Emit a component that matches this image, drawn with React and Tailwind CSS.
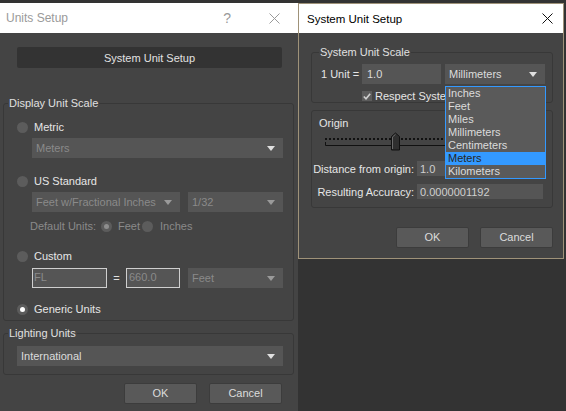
import React from 'react';

const Arrow = ({ light }) => (
  <svg width="8" height="5" viewBox="0 0 8 5" className="shrink-0">
    <polygon points="0,0 8,0 4,5" fill={light ? '#e0e0e0' : '#9a9a9a'} />
  </svg>
);

const Select = ({ text, light, arrowLight, className = '' }) => (
  <div className={'flex items-center justify-between h-[20px] bg-[#555555] pl-[4px] pr-[8px] ' + className}>
    <span className={light ? 'text-[#dcdcdc] whitespace-nowrap' : 'text-[#8a8a8a] whitespace-nowrap'}>{text}</span>
    <Arrow light={light || arrowLight} />
  </div>
);

const Radio = ({ dot }) => (
  <span className="w-[11px] h-[11px] rounded-full bg-[#5c5c5c] flex items-center justify-center shrink-0">
    {dot === 'on' && <span className="w-[5px] h-[5px] rounded-full bg-white" />}
    {dot === 'dim' && <span className="w-[5px] h-[5px] rounded-full bg-[#8e8e8e]" />}
  </span>
);

const Button = ({ children }) => (
  <button className="w-[73px] h-[21px] bg-[#595959] border border-[#3c3c3c] rounded-[2px] text-[#dcdcdc] leading-none">
    {children}
  </button>
);

const Close = ({ color }) => (
  <svg width="11" height="11" viewBox="0 0 11 11">
    <path d="M0.5 0.5 L10.5 10.5 M10.5 0.5 L0.5 10.5" stroke={color} strokeWidth="1" />
  </svg>
);

const Slider = () => {
  const dots = [];
  for (let x = 0; x < 216; x += 4) dots.push(<rect key={x} x={x} y="6" width="2" height="2" fill="#111" />);
  return (
    <svg width="222" height="19" viewBox="0 0 222 19" className="mt-[2px] ml-[13px]">
      {dots}
      <path d="M0.5 10 V13.5 H220" stroke="#111" strokeWidth="1" fill="none" />
      <polygon points="66.5,4.5 70.5,1 74.5,4.5 74.5,18 66.5,18" fill="#2f2f2f" stroke="#111" strokeWidth="1" />
      <path d="M67.5 17 V5 L70.5 2.3" stroke="#6a6a6a" strokeWidth="1" fill="none" />
    </svg>
  );
};

export default function App() {
  return (
    <div className="relative w-[566px] h-[411px] overflow-hidden bg-[#333333] font-['Liberation_Sans',Arial,sans-serif] text-[11px] leading-[14px]">
      {/* Units Setup window */}
      <div className="absolute left-0 top-[3px] w-[298px] h-[408px] bg-[#444444] flex flex-col">
        <div className="h-[30px] bg-white flex items-center pl-[6px] text-[#9a9a9a] shrink-0">
          <span className="text-[12px]">Units Setup</span>
          <span className="ml-auto mr-[38px] text-[14px]">?</span>
          <span className="mr-[18px]"><Close color="#9a9a9a" /></span>
        </div>

        <button className="mt-[14px] ml-[17px] mr-[16px] h-[21px] bg-[#333333] rounded-[2px] text-[#e2e2e2] shrink-0">
          System Unit Setup
        </button>

        <fieldset className="mt-[28px] ml-[3px] w-[291px] border border-[#383838] rounded-[3px] p-0">
          <legend className="ml-[4px] px-[1px] leading-[15px] text-[#e0e0e0]">Display Unit Scale</legend>
          <div className="pl-[13px] pr-[10px] pt-[9px] pb-[4px] flex flex-col">
            <div className="h-[14px] flex items-center gap-[6px] text-[#e6e6e6]">
              <Radio /> <span>Metric</span>
            </div>
            <Select text="Meters" arrowLight className="mt-[4px] ml-[15px]" />

            <div className="mt-[16px] h-[14px] flex items-center gap-[6px] text-[#e6e6e6]">
              <Radio /> <span>US Standard</span>
            </div>
            <div className="mt-[4px] ml-[15px] flex gap-[8px]">
              <Select text="Feet w/Fractional Inches" className="w-[148px]" />
              <Select text="1/32" className="flex-1" />
            </div>
            <div className="mt-[7px] ml-[13px] h-[14px] flex items-center text-[#8a8a8a] whitespace-nowrap">
              <span className="w-[71px]">Default Units:</span>
              <Radio dot="dim" />
              <span className="ml-[6px] w-[24px]">Feet</span>
              <Radio />
              <span className="ml-[7px]">Inches</span>
            </div>

            <div className="mt-[16px] h-[14px] flex items-center gap-[6px] text-[#e6e6e6]">
              <Radio /> <span>Custom</span>
            </div>
            <div className="mt-[5px] ml-[15px] flex items-center">
              <div className="w-[75px] h-[20px] border border-[#cfcfcf] bg-[#555555] text-[#8a8a8a] pl-[1px] leading-[17px]">FL</div>
              <span className="w-[19px] text-center text-[#e0e0e0]">=</span>
              <div className="w-[54px] h-[20px] border border-[#cfcfcf] bg-[#555555] text-[#8a8a8a] pl-[2px] leading-[17px]">660.0</div>
              <Select text="Feet" className="ml-[8px] flex-1" />
            </div>

            <div className="mt-[14px] h-[14px] flex items-center gap-[6px] text-[#e6e6e6]">
              <Radio dot="on" /> <span>Generic Units</span>
            </div>
          </div>
        </fieldset>

        <fieldset className="mt-[5px] ml-[3px] w-[291px] border border-[#383838] rounded-[3px] p-0">
          <legend className="ml-[4px] px-[1px] leading-[15px] text-[#e0e0e0]">Lighting Units</legend>
          <div className="pl-[13px] pr-[10px] pt-[5px] pb-[8px]">
            <Select text="International" light />
          </div>
        </fieldset>

        <div className="mt-[8px] flex justify-end gap-[12px] pr-[16px]">
          <Button>OK</Button>
          <Button>Cancel</Button>
        </div>
      </div>

      {/* System Unit Setup window */}
      <div className="absolute left-[298px] top-[3px] w-[266px] h-[256px] border border-[#9f9279] bg-[#444444] flex flex-col">
        <div className="h-[29px] bg-white flex items-center pl-[8px] pr-[10px] justify-between shrink-0 text-black">
          <span className="text-[11.5px]">System Unit Setup</span>
          <Close color="#111" />
        </div>

        <fieldset className="mt-[12px] ml-[12px] w-[242px] border border-[#383838] rounded-[3px] p-0">
          <legend className="ml-[7px] px-[1px] leading-[15px] text-[#e0e0e0]">System Unit Scale</legend>
          <div className="pt-[4px] pl-[9px] flex flex-col">
            <div className="h-[20px] flex items-center">
              <span className="w-[41px] text-[#e6e6e6] whitespace-nowrap">1 Unit =</span>
              <div className="w-[79px] h-[20px] bg-[#555555] text-[#dcdcdc] pl-[5px] flex items-center">1.0</div>
              <Select text="Millimeters" light className="ml-[4px] w-[100px]" />
            </div>
            <div className="mt-[6px] ml-[41px] h-[12px] flex items-center text-[#e6e6e6]">
              <span className="w-[10px] h-[10px] bg-[#5c5c5c] flex items-center justify-center shrink-0">
                <svg width="8" height="7" viewBox="0 0 8 7">
                  <path d="M0.8 3.5 L3 5.8 L7.2 0.8" stroke="#d0d0d0" strokeWidth="1.6" fill="none" />
                </svg>
              </span>
              {/* the open list hides the rest of this label */}
              <span className="ml-[3px] w-[70px] overflow-hidden whitespace-nowrap">Respect System Units in Files</span>
            </div>
          </div>
        </fieldset>

        <div className="mt-[7px] ml-[12px] w-[242px] border border-[#383838] rounded-[3px] pt-[5px] pb-[8px]">
          <div className="pl-[7px] text-[#e6e6e6]">Origin</div>
          <Slider />
          <div className="mt-[10px] grid grid-cols-[102px_126px] gap-x-[3px] gap-y-[8px] items-center">
            <span className="text-right text-[#e6e6e6] whitespace-nowrap">Distance from origin:</span>
            <div className="h-[15px] bg-[#555555] text-[#cfcfcf] pl-[3px] flex items-center">1.0</div>
            <span className="text-right text-[#e6e6e6] whitespace-nowrap">Resulting Accuracy:</span>
            <div className="h-[15px] bg-[#555555] text-[#cfcfcf] pl-[3px] flex items-center">0.0000001192</div>
          </div>
        </div>

        <div className="mt-[19px] flex justify-end gap-[11px] pr-[10px]">
          <Button>OK</Button>
          <Button>Cancel</Button>
        </div>

        {/* open unit list */}
        <div className="absolute left-[146px] top-[82px] w-[101px] h-[93px] border border-[#3399ff] bg-[#5a5a5a] flex flex-col">
          {['Inches', 'Feet', 'Miles', 'Millimeters', 'Centimeters', 'Meters', 'Kilometers'].map((u) => (
            <div
              key={u}
              className={
                'h-[13px] leading-[13px] pl-[2px] ' +
                (u === 'Meters' ? 'bg-[#3399ff] text-[#262626]' : 'text-[#dcdcdc]')
              }
            >
              {u}
            </div>
          ))}
        </div>
      </div>
    </div>
  );
}
